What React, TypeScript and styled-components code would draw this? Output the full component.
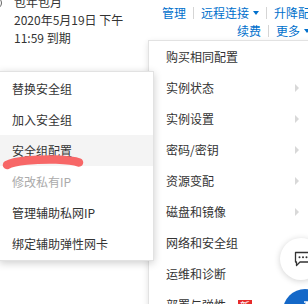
import * as React from 'react'
import styled, { createGlobalStyle } from 'styled-components'

const GlobalStyle = createGlobalStyle`
	html, body {
		margin: 0;
		padding: 0;
		background: #fff;
	}
	body {
		font-family: 'Noto Sans CJK SC', 'Liberation Sans', sans-serif;
		font-size: 12px;
		color: #333;
	}
`

const mainItems = [
	{ label: '购买相同配置', sub: false },
	{ label: '实例状态', sub: true },
	{ label: '实例设置', sub: true },
	{ label: '密码/密钥', sub: true },
	{ label: '资源变配', sub: true },
	{ label: '磁盘和镜像', sub: true },
	{ label: '网络和安全组', sub: false },
	{ label: '运维和诊断', sub: false },
	{ label: '部署与弹性', sub: false, badge: true },
]

const subItems = [
	{ label: '替换安全组' },
	{ label: '加入安全组' },
	{ label: '安全组配置', active: true },
	{ label: '修改私有IP', disabled: true },
	{ label: '管理辅助私网IP' },
	{ label: '绑定辅助弹性网卡' },
]

export default function App() {
	return (
		<Page>
			<GlobalStyle />
			<Header>
				<Info>
					<EdgeIcon />
					<div>包年包月</div>
					<div>2020年5月19日 下午</div>
					<div>11:59 到期</div>
				</Info>
				<Actions>
					<ActionRow>
						<Link>管理</Link>
						<Sep />
						<Link>远程连接</Link>
						<Caret />
						<Sep />
						<Link>升降配</Link>
					</ActionRow>
					<ActionRow>
						<Link>续费</Link>
						<Sep />
						<Link>更多</Link>
						<Caret />
					</ActionRow>
				</Actions>
			</Header>

			<MainMenu>
				{mainItems.map((item) => (
					<MainItem key={item.label}>
						<span>
							{item.label}
							{item.badge && <Badge>新</Badge>}
						</span>
						{item.sub && <Chevron />}
					</MainItem>
				))}
			</MainMenu>

			<SubMenu>
				{subItems.map((item) => (
					<SubItem key={item.label} $active={item.active} $disabled={item.disabled}>
						{item.label}
					</SubItem>
				))}
			</SubMenu>

			<Scribble width="90" height="20" viewBox="0 0 90 20">
				<path
					d="M7 12 C 14 8, 36 6, 56 6.5 C 68 7, 75 8, 79 9.5"
					stroke="#f76767"
					strokeWidth="8.5"
					strokeLinecap="round"
					fill="none"
				/>
			</Scribble>

			<ChatButton>
				<svg width="18" height="16" viewBox="0 0 18 16">
					<path
						d="M1.5 1.5 H16.5 V11 H6 L2.5 14.5 V11 H1.5 Z"
						fill="none"
						stroke="#333"
						strokeWidth="1.3"
						strokeLinejoin="round"
					/>
					<circle cx="5.5" cy="6.3" r="1" fill="#333" />
					<circle cx="9" cy="6.3" r="1" fill="#333" />
					<circle cx="12.5" cy="6.3" r="1" fill="#333" />
				</svg>
			</ChatButton>
			<BlueButton>
				<svg width="18" height="18" viewBox="0 0 18 18">
					<path d="M3 14 L13 4 M9 4 H13 V8" stroke="#fff" strokeWidth="1.6" fill="none" />
				</svg>
			</BlueButton>
		</Page>
	)
}

const Page = styled.div`
	position: relative;
	width: 308px;
	height: 304px;
	overflow: hidden;
	background: #fff;
`

const Header = styled.div`
	display: flex;
	align-items: flex-start;
`

const Info = styled.div`
	position: relative;
	width: 146px;
	flex-shrink: 0;
	padding-left: 14px;
	margin-top: -7px;
	line-height: 18px;
	color: #333;
`

const EdgeIcon = styled.span`
	position: absolute;
	left: -10px;
	top: 4px;
	width: 10px;
	height: 10px;
	border: 1.5px solid #666;
	border-radius: 50%;
`

const Actions = styled.div`
	flex-shrink: 0;
	margin-left: auto;
	margin-right: -2px;
	margin-top: 4px;
	display: flex;
	flex-direction: column;
	align-items: flex-end;
`

const ActionRow = styled.div`
	display: flex;
	align-items: center;
	height: 18px;
	white-space: nowrap;
`

const Link = styled.span`
	color: #0070cc;
	line-height: 18px;
`

const Sep = styled.span`
	display: inline-block;
	width: 1px;
	height: 12px;
	margin: 0 7px;
	background: #d5d5d5;
`

const Caret = styled.span`
	display: inline-block;
	margin-left: 4px;
	width: 0;
	height: 0;
	border-left: 3.5px solid transparent;
	border-right: 3.5px solid transparent;
	border-top: 4px solid #0070cc;
`

const MainMenu = styled.div`
	position: absolute;
	top: 40px;
	left: 148px;
	width: 162px;
	background: #fff;
	border: 1px solid #e2e2e2;
	box-shadow: 0 2px 6px rgba(0, 0, 0, 0.12);
	z-index: 1;
`

const MainItem = styled.div`
	display: flex;
	align-items: center;
	justify-content: space-between;
	height: 31px;
	padding: 0 12px 0 17px;
	color: #333;
	white-space: nowrap;
`

const Chevron = styled.span`
	width: 0;
	height: 0;
	border-top: 4px solid transparent;
	border-bottom: 4px solid transparent;
	border-left: 4px solid #d8d8d8;
`

const Badge = styled.span`
	display: inline-block;
	margin-left: 12px;
	padding: 0 2px;
	font-size: 10px;
	line-height: 12px;
	color: #fff;
	background: #e62b2b;
`

const SubMenu = styled.div`
	position: absolute;
	top: 71px;
	left: -1px;
	width: 153px;
	padding: 0.5px 0 1px;
	background: #fff;
	border: 1px solid #e2e2e2;
	box-shadow: 0 2px 8px rgba(0, 0, 0, 0.2);
	z-index: 2;
`

const SubItem = styled.div<{ $active?: boolean; $disabled?: boolean }>`
	display: flex;
	align-items: center;
	height: 31px;
	padding-left: 12px;
	white-space: nowrap;
	color: ${(p) => (p.$disabled ? '#aaa' : '#333')};
	background: ${(p) => (p.$active ? '#f4f4f4' : '#fff')};
`

const Scribble = styled.svg`
	position: absolute;
	left: 0;
	top: 153px;
	z-index: 3;
`

const ChatButton = styled.div`
	position: absolute;
	left: 280px;
	top: 238px;
	width: 42px;
	height: 42px;
	border-radius: 50%;
	background: #fff;
	box-shadow: 0 1px 6px rgba(0, 0, 0, 0.18);
	display: flex;
	align-items: center;
	padding-left: 14px;
	box-sizing: border-box;
	z-index: 4;
`

const BlueButton = styled.div`
	position: absolute;
	left: 283px;
	top: 289px;
	width: 44px;
	height: 44px;
	border-radius: 50%;
	background: #1468c8;
	display: flex;
	align-items: flex-start;
	padding: 9px 0 0 12px;
	box-sizing: border-box;
	z-index: 4;
`
